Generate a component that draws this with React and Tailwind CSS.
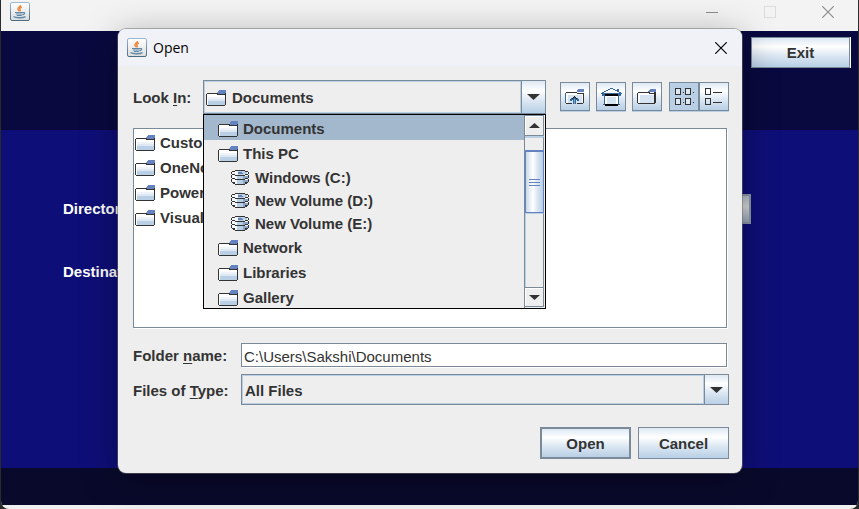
import React from "react";

const oceanFill =
  "bg-[linear-gradient(to_bottom,#dde8f3_0%,#ffffff_30%,#dde8f3_60%,#b8cfe5_100%)]";

function JavaIcon() {
  return (
    <svg width="20" height="19" viewBox="0 0 20 19" aria-hidden="true" className="shrink-0">
      <defs>
        <linearGradient id="javaFrame" x1="0" y1="0" x2="0" y2="1">
          <stop offset="0" stopColor="#9db9cf" />
          <stop offset="1" stopColor="#4a6b82" />
        </linearGradient>
        <linearGradient id="javaFace" x1="0" y1="0" x2="0" y2="1">
          <stop offset="0" stopColor="#ffffff" />
          <stop offset="1" stopColor="#dcdcdc" />
        </linearGradient>
      </defs>
      <rect x="0.5" y="0.5" width="19" height="18" rx="1.5" fill="url(#javaFace)" stroke="url(#javaFrame)" />
      <path d="M10.300 3c.8 1.600-2.400 2.400-2.400 4 0 .9 1 1.500 1.600 2.300M11.800 5c-1.800.6-2.400 1.500-1.800 2.500.4.700.5 1.100-.1 1.700" fill="none" stroke="#ee8a3c" strokeWidth="1.500" />
      <path d="M5 10.500h8M5.800 12h6.700M6.800 13.500h5M13 10.700c2.200-.6 2.400 1.400-.4 2.100" fill="none" stroke="#5f88a8" strokeWidth="1.200" />
      <path d="M3.500 14.600c2 1.500 9.500 1.500 12 0" fill="none" stroke="#5f88a8" strokeWidth="1.300" />
    </svg>
  );
}

function FolderIcon() {
  return (
    <svg width="20" height="16" viewBox="0 0 20 16" shapeRendering="crispEdges" aria-hidden="true" className="shrink-0">
      <path d="M1 4h18v11H1z" fill="#ffffff" />
      <path d="M2 7h17v2H2z" fill="#eef3f9" />
      <path d="M2 9h17v2H2z" fill="#dde8f3" />
      <path d="M2 11h17v4H2z" fill="#b8cfe5" />
      <path d="M1 3h11v1H1zM0 4h1v11H0zM1 15h18v1H1zM19 3h1v12h-1zM11 4h8v1h-8z" fill="#333333" />
      <path d="M13 0h7v3h-1v1h-7V1h1z" fill="#6382bf" />
      <path d="M11 2h1v1h-1z" fill="#a3b8cc" />
    </svg>
  );
}

function DriveIcon() {
  return (
    <svg width="18" height="15" viewBox="0 0 18 15" shapeRendering="crispEdges" aria-hidden="true" className="shrink-0">
      <path d="M4 1h10v1h3v11h-3v1H4v-1H1V2h3z" fill="#f4f8fc" />
      <path d="M7 1h7v1h2v2h-3v1H7zM6 6h6v3H6zM6 10h6v4H6z" fill="#b8cfe5" />
      <path d="M12 6h5v2h-3v1h-2zM12 10h5v2h-3v2h-2z" fill="#8ba6c6" />
      <path d="M7 2h4v1h1v1H7z" fill="#6382bf" />
      <path
        d="M4 0h10v1H4zM1 1h3v1H1zM14 1h3v1h-3zM0 2h1v2H0zM17 2h1v2h-1zM1 4h3v1H1zM14 4h3v1h-3zM4 5h10v1H4zM0 5h1v3H0zM17 5h1v3h-1zM1 8h3v1H1zM14 8h3v1h-3zM4 9h10v1H4zM0 9h1v3H0zM17 9h1v3h-1zM1 12h3v1H1zM14 12h3v1h-3zM4 14h10v1H4zM2 13h2v1H2zM14 13h2v1h-2z"
        fill="#333333"
      />
    </svg>
  );
}

function NewFolderIcon() {
  return (
    <svg width="19" height="15" viewBox="0 0 19 15" shapeRendering="crispEdges" aria-hidden="true">
      <path d="M1 4h16v10H1z" fill="#ffffff" />
      <path d="M3 6h14v8H3z" fill="#d6e3f0" />
      <path d="M1 3h12v1H1zM0 4h1v10H0zM1 14h17v1H1zM17 3h2v11h-2zM12 4h5v1h-5z" fill="#333333" />
      <path d="M13 0h6v3h-8V2h1V1h1z" fill="#6382bf" />
    </svg>
  );
}

function UpFolderIcon() {
  return (
    <svg width="19" height="15" viewBox="0 0 19 15" shapeRendering="crispEdges" aria-hidden="true">
      <path d="M1 4h17v10H1z" fill="#ffffff" />
      <path d="M3 6h14v8H3z" fill="#d6e3f0" />
      <path d="M1 3h11v1H1zM1 14h6v1H1zM12 14h6v1h-6zM18 4h1v10h-1zM12 4h6v1h-6z" fill="#333333" />
      <path d="M0 4h1v10H0z" fill="#34679a" />
      <path d="M13 0h6v3h-7V1h1z" fill="#6382bf" />
      <path d="M8 8h3v1h2v1h1v2h-2v-1h-1v4H8v-4H7v1H5v-2h1V9h2z" fill="#34679a" />
      <path d="M9 10h1v5H9z" fill="#7fa5c9" />
      <path d="M9 7h1v1H9zM8 8h1v1H8zM10 8h1v1h-1zM7 9h1v1H7zM11 9h1v1h-1z" fill="#111111" />
    </svg>
  );
}

function HomeIcon() {
  return (
    <svg width="21" height="19" viewBox="0 -1 21 19" shapeRendering="crispEdges" aria-hidden="true">
      <path d="M9 1h3v1h2v1h2v1h2v1h1v1H2V5h1V4h2V3h2V2h2z" fill="#ffffff" />
      <path d="M4 8h13v8H4z" fill="#ffffff" />
      <path d="M6 9h9v7H6z" fill="#d6e3f0" />
      <path
        d="M9 0h3v1H9zM7 1h2v1H7zM12 1h2v1h-2zM5 2h2v1H5zM14 2h2v1h-2zM3 3h2v1H3zM16 1h2v3h-2zM1 4h2v1H1zM18 4h2v1h-2zM0 5h21v1H0zM1 6h3v2H1zM17 6h3v2h-3zM3 8h1v8H3zM17 8h1v8h-1zM2 16h2v1H2zM17 16h2v1h-2z"
        fill="#34679a"
      />
      <path d="M4 6h13v2H4zM4 16h13v2H4z" fill="#000000" />
    </svg>
  );
}

function ListIcon() {
  return (
    <svg width="20" height="17" viewBox="0 0 20 17" shapeRendering="crispEdges" aria-hidden="true">
      <path d="M1 1h4v5H1zM11 1h4v5h-4zM1 11h4v5H1zM11 11h4v5h-4z" fill="#dde8f3" />
      <path
        d="M0 0h6v7H0zM1 1v5h4V1zM10 0h6v7h-6zM11 1v5h4V1zM0 10h6v7H0zM1 11v5h4v-5zM10 10h6v7h-6zM11 11v5h4v-5zM8 4h1v1H8zM18 4h1v1h-1zM8 14h1v1H8zM18 14h1v1h-1z"
        fill="#333333"
        fillRule="evenodd"
      />
    </svg>
  );
}

function DetailsIcon() {
  return (
    <svg width="18" height="17" viewBox="0 0 18 17" shapeRendering="crispEdges" aria-hidden="true">
      <path
        d="M0 0h6v7H0zM1 1v5h4V1zM0 10h6v7H0zM1 11v5h4v-5zM8 4h9v1H8zM8 14h9v1H8z"
        fill="#333333"
        fillRule="evenodd"
      />
    </svg>
  );
}

function Triangle({ up = false, small = false }) {
  return (
    <svg
      width={small ? 11 : 13}
      height={small ? 5 : 6}
      viewBox="0 0 13 6"
      preserveAspectRatio="none"
      aria-hidden="true"
    >
      <path d={up ? "M0 6h13L6.500 0z" : "M0 0h13L6.500 6z"} fill="#333333" />
    </svg>
  );
}

function CloseGlyph() {
  return (
    <svg width="12" height="12" viewBox="0 0 12 12" aria-hidden="true">
      <path d="M0.300 0.300l11.400 11.400M11.700 0.300L0.300 11.700" stroke="currentColor" strokeWidth="1.200" />
    </svg>
  );
}

function ToolButton({ label, children }) {
  return (
    <button
      type="button"
      aria-label={label}
      className={`flex h-[29px] w-[30px] items-center border border-[#7a8a99] pl-[4px] shadow-[0_1px_0_#b8cfe5] ${oceanFill}`}
    >
      {children}
    </button>
  );
}

const files = ["Custom", "OneNote", "Power", "Visual"];

const places = [
  { name: "Documents", selected: true },
  { name: "This PC" },
  { name: "Windows (C:)", drive: true },
  { name: "New Volume (D:)", drive: true },
  { name: "New Volume (E:)", drive: true },
  { name: "Network" },
  { name: "Libraries" },
  { name: "Gallery" },
];

function PlaceRow({ name, drive, selected }) {
  const size = drive ? "h-[23px] gap-[6px] pl-[27px]" : "h-[25px] gap-[5px] pl-[14px]";
  return (
    <li
      role="option"
      aria-selected={!!selected}
      className={`flex items-center pt-[2px] ${size} ${selected ? "bg-[#a3b8cc]" : ""}`}
    >
      {drive ? <DriveIcon /> : <FolderIcon />}
      <span>{name}</span>
    </li>
  );
}

function ScrollBar() {
  return (
    <div className="flex w-[21px] shrink-0 flex-col border-l border-[#7a8a99] pr-px">
      <button
        type="button"
        aria-label="Scroll up"
        className="flex h-[21px] items-center justify-center border-y border-r border-[#7a8a99] bg-[#eeeeee] shadow-[inset_1px_1px_0_#ffffff]"
      >
        <Triangle up small />
      </button>
      <div className="h-[14px] border-r border-t-2 border-r-[#7a8a99] border-t-[#b8cfe5]" />
      <div className="flex h-[63px] flex-col items-center justify-center gap-[2px] border border-t-2 border-[#6382bf] bg-[linear-gradient(to_right,#c8d8ea,#ffffff_40%,#dde8f3_65%,#b8cfe5)]">
        <span className="h-px w-[11px] bg-[#6382bf]" />
        <span className="h-px w-[11px] bg-[#6382bf]" />
        <span className="h-px w-[11px] bg-[#6382bf]" />
      </div>
      <div className="flex-1 border-l border-r border-t border-l-[#b8cfe5] border-r-[#7a8a99] border-t-[#b8cfe5]" />
      <button
        type="button"
        aria-label="Scroll down"
        className="mb-px flex h-[20px] items-center justify-center border-y border-r border-[#7a8a99] bg-[#eeeeee] shadow-[inset_1px_1px_0_#ffffff]"
      >
        <Triangle small />
      </button>
    </div>
  );
}

function LookInBox() {
  return (
    <div className="relative flex h-[34px] min-w-0 flex-1 border border-[#7a8a99]">
      <div className="flex min-w-0 flex-1 items-center border border-[#b8cfe5] pl-px pt-[2px]">
        <FolderIcon />
        <select id="look-in" className="min-w-0 flex-1 appearance-none bg-transparent pl-[6px] outline-none">
          <option>Documents</option>
        </select>
      </div>
      <span className={`flex w-[24px] items-center justify-center border-l border-[#7a8a99] ${oceanFill}`}>
        <Triangle />
      </span>
      <div className="absolute -left-px -right-px top-full z-10 mt-px flex h-[195px] overflow-hidden border border-black bg-[#eeeeee]">
        <ul role="listbox" aria-label="Look In" className="min-w-0 flex-1">
          {places.map((place) => (
            <PlaceRow key={place.name} {...place} />
          ))}
        </ul>
        <ScrollBar />
      </div>
    </div>
  );
}

function OpenDialog() {
  return (
    <section
      role="dialog"
      aria-labelledby="dialog-title"
      className="absolute left-[118px] right-[117px] top-[29px] rounded-lg bg-[#eeeeee] shadow-[0_0_0_1px_rgba(110,110,110,0.5),0_7px_36px_rgba(0,0,0,0.35)]"
    >
      <header className="flex h-[37px] items-center rounded-t-lg bg-[#f1f2f8] pl-[9px] pr-[15px]">
        <JavaIcon />
        <h1 id="dialog-title" className="ml-[6px] flex-1 font-['Open_Sans',sans-serif] text-[14px] text-black">
          Open
        </h1>
        <button type="button" aria-label="Close dialog" className="text-black">
          <CloseGlyph />
        </button>
      </header>

      <div className="flex flex-col px-[13px] pb-[14px] pl-[15px] pt-[14px] font-bold">
        <div className="flex items-center">
          <label htmlFor="look-in" className="w-[70px] shrink-0 pt-[2px]">
            Look <u className="underline-offset-2">I</u>n:
          </label>
          <LookInBox />
          <div className="ml-[14px] flex gap-[6px] pb-px">
            <ToolButton label="Up One Level">
              <UpFolderIcon />
            </ToolButton>
            <ToolButton label="Home">
              <HomeIcon />
            </ToolButton>
            <ToolButton label="Create New Folder">
              <NewFolderIcon />
            </ToolButton>
            <div className="ml-px flex shadow-[0_1px_0_#b8cfe5]">
              <button
                type="button"
                aria-label="List"
                aria-pressed="true"
                className="flex h-[29px] w-[30px] items-center border border-[#7a8a99] bg-[#b8cfe5] pl-[5px]"
              >
                <ListIcon />
              </button>
              <button
                type="button"
                aria-label="Details"
                aria-pressed="false"
                className={`flex h-[29px] w-[30px] items-center border border-[#7a8a99] pl-[5px] ${oceanFill}`}
              >
                <DetailsIcon />
              </button>
            </div>
          </div>
        </div>

        <ul className="mr-[2px] mt-[14px] h-[200px] overflow-hidden border border-[#7a8a99] bg-white pl-px pt-px shadow-[1px_1px_0_#ffffff]">
          {files.map((name) => (
            <li key={name} className="flex h-[25px] items-center gap-[5px]">
              <FolderIcon />
              <span>{name}</span>
            </li>
          ))}
        </ul>

        <div className="mt-[15px] flex items-center">
          <label htmlFor="folder-name" className="w-[108px] shrink-0 pt-[2px]">
            Folder <u className="underline-offset-2">n</u>ame:
          </label>
          <input
            id="folder-name"
            type="text"
            defaultValue="C:\Users\Sakshi\Documents"
            className="mr-[2px] h-[24px] min-w-0 flex-1 border border-[#7a8a99] bg-white px-[2px] pt-[2px] font-normal shadow-[1px_1px_0_#ffffff] outline-none"
          />
        </div>

        <div className="mt-[7px] flex items-center">
          <label htmlFor="file-type" className="w-[108px] shrink-0 pt-[2px]">
            Files of <u className="underline-offset-2">T</u>ype:
          </label>
          <div className="flex h-[31px] min-w-0 flex-1 border border-[#7a8a99]">
            <select
              id="file-type"
              className="min-w-0 flex-1 appearance-none border border-[#b8cfe5] bg-transparent pl-[2px] pt-[2px] outline-none"
            >
              <option>All Files</option>
            </select>
            <span className={`flex w-[24px] items-center justify-center border-l border-[#7a8a99] ${oceanFill}`}>
              <Triangle />
            </span>
          </div>
        </div>

        <div className="mt-[22px] flex justify-end gap-[7px]">
          <button type="button" className={`h-[32px] w-[91px] border-2 border-[#7a8a99] pt-[2px] ${oceanFill}`}>
            Open
          </button>
          <button type="button" className={`h-[32px] w-[91px] border border-[#7a8a99] pt-[2px] ${oceanFill}`}>
            Cancel
          </button>
        </div>
      </div>
    </section>
  );
}

export default function App() {
  return (
    <div className="flex min-h-screen flex-col bg-[#2b2b2b] px-px font-['Liberation_Sans',Arial,sans-serif] text-[15px] leading-[18px] text-[#333333]">
      <main className="flex flex-1 flex-col overflow-hidden rounded-b-lg bg-[#f0f0f0]">
        <header className="flex h-[31px] items-start bg-[#f3f3f3] pl-[9px] pr-[24px] pt-[2px] text-[#8c8c8c]">
          <JavaIcon />
          <div className="ml-auto flex gap-[46px] pt-[4px]">
            <button type="button" aria-label="Minimize" className="flex h-[12px] w-[12px] items-center">
              <span className="h-px w-full bg-[#8c8c8c]" />
            </button>
            <button type="button" aria-label="Maximize" className="h-[12px] w-[12px] border border-[#dcdcdc]" />
            <button type="button" aria-label="Close">
              <CloseGlyph />
            </button>
          </div>
        </header>

        <div className="flex h-[99px] items-start justify-end bg-[#09093f] pr-[8px] pt-[6px]">
          <button
            type="button"
            className={`h-[31px] w-[99px] border border-[#7a8a99] font-bold shadow-[1px_0_0_#ffffff] ${oceanFill}`}
          >
            Exit
          </button>
        </div>

        <div className="flex flex-1 flex-col gap-[33px] bg-[#0e0e78] pl-[62px] pr-[107px] pt-[64px] font-bold text-white">
          <div className="flex h-[30px] items-center justify-between">
            <span>Directory</span>
            <button
              type="button"
              aria-label="Browse"
              className="h-[30px] w-[90px] border-2 border-[#8a97a5] bg-[linear-gradient(to_bottom,#b4bcc6,#d8d8d8_40%,#9aa8b8)]"
            />
          </div>
          <div className="flex h-[30px] items-center">
            <span>Destination</span>
          </div>
        </div>

        <footer className="h-[37px] bg-[#09092c]" />
        <div className="h-[4px]" />
      </main>
      <OpenDialog />
    </div>
  );
}
